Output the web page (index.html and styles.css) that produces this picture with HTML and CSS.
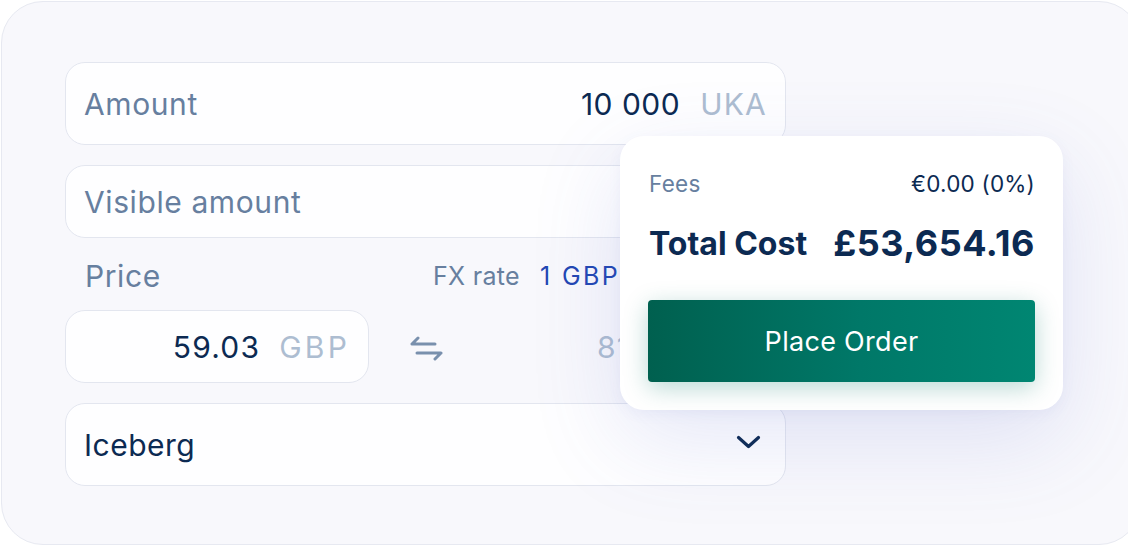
FILE: index.html
```html
<!DOCTYPE html>
<html>
<head>
<meta charset="utf-8">
<link rel="stylesheet" href="styles.css">
</head>
<body>
<div class="card">
  <div class="form">
    <div class="field tall">
      <span class="label">Amount</span>
      <span class="value">10 000</span>
      <span class="unit">UKA</span>
    </div>
    <div class="field short">
      <span class="label">Visible amount</span>
    </div>
    <div class="price-head">
      <span class="label">Price</span>
      <span class="fx"><span class="fx-label">FX rate</span><span class="fx-value">1 GBP = 1.1720 EUR</span></span>
    </div>
    <div class="price-row">
      <div class="field short price">
        <span class="value">59.03</span>
        <span class="unit">GBP</span>
      </div>
      <svg class="swap" width="34" height="26" viewBox="0 0 34 26" fill="none" stroke="#7990ad" stroke-width="3" stroke-linecap="round" stroke-linejoin="round">
        <path d="M2 9 H25 M2 9 L8 3"/>
        <path d="M7 18 H31 M31 18 L25 24"/>
      </svg>
      <div class="field short price ghost">
        <span class="value muted">81.25</span>
      </div>
    </div>
    <div class="field tall select">
      <span class="value">Iceberg</span>
      <svg class="chev" width="25" height="15" viewBox="0 0 25 15" fill="none" stroke="#0c2a52" stroke-width="3.2" stroke-linecap="round" stroke-linejoin="round">
        <path d="M2.5 2.5 L12.5 11.5 L22.5 2.5"/>
      </svg>
    </div>
  </div>

  <div class="popup">
    <div class="row fees">
      <span class="fees-label">Fees</span>
      <span class="fees-value">€0.00 (0%)</span>
    </div>
    <div class="row total">
      <span class="total-label">Total Cost</span>
      <span class="total-value">£53,654.16</span>
    </div>
    <button class="place">Place Order</button>
  </div>
</div>
</body>
</html>
```

FILE: styles.css
```css
* { box-sizing: border-box; }
html, body { margin: 0; padding: 0; background: #ffffff; }
body {
  width: 1128px;
  height: 546px;
  overflow: hidden;
  font-family: Inter, "Liberation Sans", sans-serif;
  padding: 1px 0 0 1px;
}
.card {
  position: relative;
  width: 1140px;
  height: 544px;
  border: 1.5px solid #e7e9f1;
  border-radius: 42px;
  background: #f8f8fc;
  padding: 60px 0 0 63px;
  overflow: hidden;
}
.form {
  width: 721px;
  display: flex;
  flex-direction: column;
}
.field {
  display: flex;
  align-items: center;
  background: #fefeff;
  border: 1.5px solid #e3e6ef;
  border-radius: 20px;
  padding: 0 18px 0 18px;
  white-space: nowrap;
}
.field.tall { height: 83px; }
.field.short { height: 73px; margin-top: 20px; }
.label {
  font-size: 30px;
  color: #677f9f;
  letter-spacing: 0.6px;
}
.value {
  font-size: 30px;
  color: #0c2a52;
  margin-left: auto;
  letter-spacing: 0.5px;
}
.unit {
  font-size: 30px;
  color: #adbdd1;
  margin-left: 20px;
  letter-spacing: 1.2px;
}
.price-head {
  display: grid;
  grid-template-columns: 368px 1fr;
  align-items: center;
  height: 72px;
  padding-top: 4px;
  white-space: nowrap;
}
.price-head .label { padding-left: 20px; }
.fx {
  font-size: 25px;
  display: flex;
  gap: 20px;
  letter-spacing: 0.3px;
}
.fx-label { color: #677f9f; }
.fx-value { color: #2247b3; letter-spacing: 2.4px; }
.price-row {
  display: flex;
  align-items: center;
}
.field.price {
  margin-top: 0;
  width: 304px;
  height: 73px;
}
.price .value { letter-spacing: 1.2px; }
.price .unit { letter-spacing: 3.2px; margin-left: 19px; }
.swap { margin-left: 41px; margin-top: 2px; }
.field.ghost {
  border-color: transparent;
  background: transparent;
  width: 330px;
  margin-left: 12px;
  justify-content: flex-start;
}
.value.muted {
  margin-left: 122px;
  color: #adbdd1;
}
.field.select {
  margin-top: 20px;
  height: 83px;
}
.select .value { margin-left: 0; color: #0c2a52; }
.chev { margin-left: auto; margin-right: 6px; margin-top: -4px; }

.popup {
  position: absolute;
  left: 618px;
  top: 134px;
  width: 443px;
  height: 274px;
  background: #ffffff;
  border-radius: 24px;
  box-shadow: 0 30px 90px rgba(90, 100, 200, 0.15), 0 4px 14px rgba(90, 100, 180, 0.06);
  padding: 33px 28px 28px 29px;
  display: flex;
  flex-direction: column;
  z-index: 2;
}
.row {
  display: flex;
  align-items: center;
  justify-content: space-between;
  white-space: nowrap;
}
.fees { height: 28px; }
.fees-label { font-size: 22.5px; color: #677f9f; letter-spacing: 0.3px; }
.fees-value { font-size: 22.5px; color: #0c2a52; letter-spacing: 0.2px; }
.total { height: 40px; margin-top: 26px; }
.total-label { font-size: 32px; font-weight: 700; color: #0c2a52; letter-spacing: 0; }
.total-value { font-size: 36px; font-weight: 700; color: #0c2a52; letter-spacing: 0.5px; }
.place {
  margin-top: auto;
  height: 82px;
  border: none;
  border-radius: 4px;
  background: linear-gradient(90deg, #00604f 0%, #007868 55%, #008672 100%);
  color: #ffffff;
  font-family: Inter, "Liberation Sans", sans-serif;
  font-size: 27px;
  letter-spacing: 0.3px;
  box-shadow: 0 6px 24px rgba(0, 120, 100, 0.28);
  margin-left: -1px;
}
```
